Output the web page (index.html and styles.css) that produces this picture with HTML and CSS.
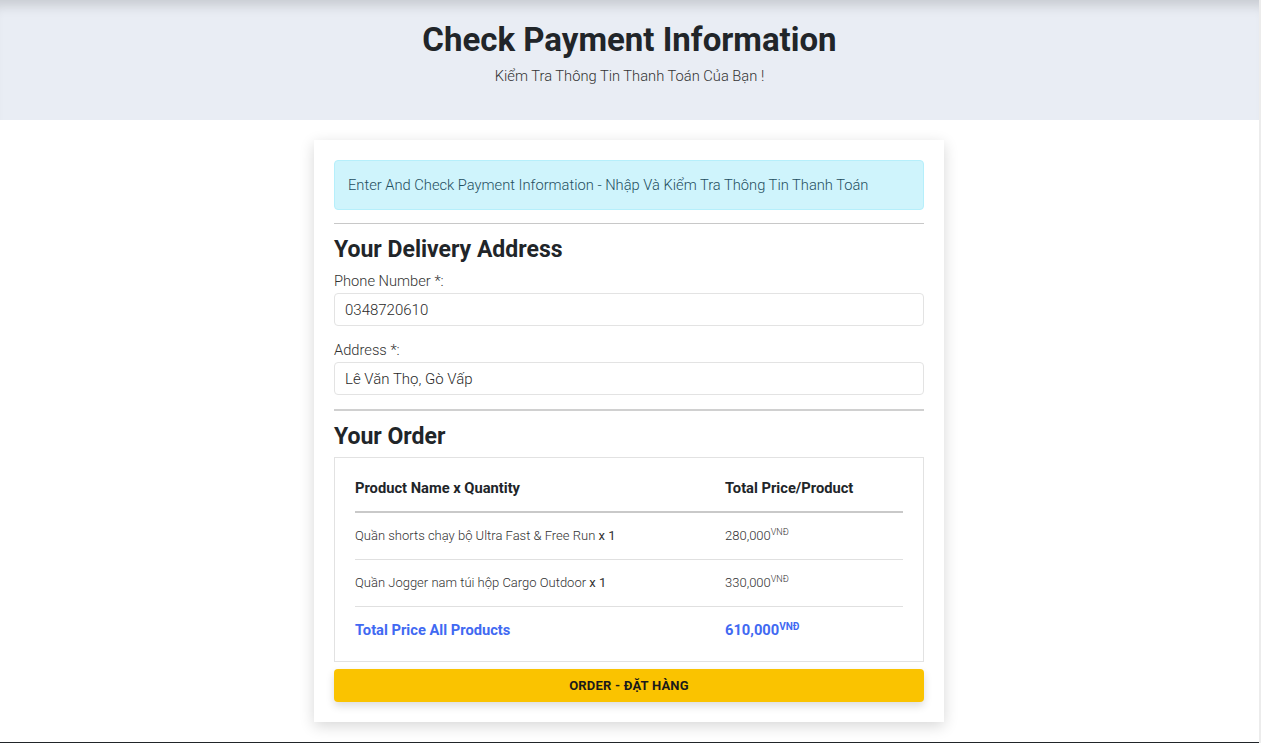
FILE: index.html
```html
<!DOCTYPE html>
<html lang="vi">
<head>
<meta charset="utf-8">
<title>Check Payment Information</title>
<link rel="stylesheet" href="styles.css">
</head>
<body>
<div class="page">
  <header class="hero">
    <h1 class="hero-title">Check Payment Information</h1>
    <p class="hero-sub">Kiểm Tra Thông Tin Thanh Toán Của Bạn !</p>
  </header>
  <main class="main">
    <section class="card">
      <div class="alert">Enter And Check Payment Information - Nhập Và Kiểm Tra Thông Tin Thanh Toán</div>
      <hr class="rule">
      <h2 class="section-title">Your Delivery Address</h2>
      <label class="label">Phone Number *:</label>
      <input class="input" type="text" value="0348720610">
      <label class="label label-gap">Address *:</label>
      <input class="input" type="text" value="Lê Văn Thọ, Gò Vấp">
      <hr class="rule rule-thick">
      <h2 class="section-title">Your Order</h2>
      <div class="order-box">
        <table class="order-table">
          <thead>
            <tr><th class="col-name">Product Name x Quantity</th><th>Total Price/Product</th></tr>
          </thead>
          <tbody>
            <tr><td class="col-name">Quần shorts chạy bộ Ultra Fast &amp; Free Run <span class="qty">x 1</span></td><td>280,000<sup>VNĐ</sup></td></tr>
            <tr><td class="col-name">Quần Jogger nam túi hộp Cargo Outdoor <span class="qty">x 1</span></td><td>330,000<sup>VNĐ</sup></td></tr>
            <tr class="total"><td class="col-name">Total Price All Products</td><td>610,000<sup>VNĐ</sup></td></tr>
          </tbody>
        </table>
      </div>
      <button class="btn-order" type="button">ORDER - ĐẶT HÀNG</button>
    </section>
  </main>
  <footer class="footer"></footer>
</div>
</body>
</html>
```

FILE: styles.css
```css
* { box-sizing: border-box; }
html, body { margin: 0; padding: 0; }
body {
  font-family: Roboto, "Liberation Sans", Arial, sans-serif;
  color: #212529;
  background: #fff;
}
.page {
  border-right: 2px solid #ececec;
  height: 743px;
  overflow: hidden;
  display: flex;
  flex-direction: column;
}
.hero {
  background: #e9edf4;
  height: 120px;
  flex: none;
  padding-top: 19px;
  text-align: center;
  box-shadow: inset 0 14px 12px -8px rgba(0,0,0,0.14);
}
.hero-title {
  margin: 0;
  font-size: 33px;
  line-height: 41px;
  font-weight: 700;
  color: #212529;
}
.hero-sub {
  margin: 5px 0 0;
  font-size: 14.7px;
  line-height: 22px;
  font-weight: 300;
  color: #333;
}
.main {
  flex: none;
  display: flex;
  justify-content: center;
  padding: 20px 1px 20px 0;
}
.card {
  width: 630px;
  background: #fff;
  padding: 20px 20px 20px;
  box-shadow: 0 4px 14px rgba(0,0,0,0.16);
  display: flex;
  flex-direction: column;
}
.alert {
  background: #cff4fc;
  border: 1px solid #b6effb;
  border-radius: 4px;
  padding: 13px 13px;
  font-size: 14.7px;
  line-height: 22px;
  font-weight: 300;
  color: #1f4f60;
}
.rule {
  margin: 13px 0 12px;
  border: 0;
  border-top: 1px solid #c8c8c8;
  height: 0;
}
.rule-thick {
  border-top: 2px solid #d0d0d0;
  margin: 14px 0 12px;
}
.section-title {
  margin: 0;
  font-size: 23px;
  line-height: 27px;
  font-weight: 700;
  color: #212529;
}
.label {
  display: block;
  margin-top: 7px;
  font-size: 14.7px;
  line-height: 22px;
  font-weight: 300;
  color: #333;
}
.label-gap { margin-top: 13px; }
.input {
  display: block;
  width: 100%;
  margin-top: 1px;
  height: 33px;
  padding: 6px 10px;
  border: 1px solid #e3e3e3;
  border-radius: 4px;
  font-family: inherit;
  font-size: 15px;
  line-height: 19px;
  font-weight: 300;
  color: #2a2a2a;
  background: #fff;
}
.order-box {
  margin-top: 7px;
  border: 1px solid #e2e2e2;
  padding: 7px 20px 8px;
}
.order-table {
  width: 100%;
  border-collapse: collapse;
}
.order-table th, .order-table td {
  text-align: left;
  padding: 12px 0;
  line-height: 22px;
  vertical-align: middle;
}
.order-table th {
  font-size: 14.7px;
  font-weight: 700;
  color: #212529;
  border-bottom: 2px solid #c9c9c9;
}
.order-table td {
  font-size: 13px;
  font-weight: 300;
  color: #333;
  border-bottom: 1px solid #e0e0e0;
}
.col-name { width: 370px; }
.qty { font-weight: 400; color: #333; }
.order-table sup {
  font-size: 9px;
  line-height: 0;
  vertical-align: 5px;
}
.order-table tr.total td {
  border-bottom: 0;
  font-size: 14.7px;
  font-weight: 700;
  color: #4169f2;
}
.order-table tr.total sup { font-size: 10px; }
.btn-order {
  margin-top: 7px;
  height: 33px;
  width: 100%;
  border: 0;
  border-radius: 4px;
  background: #fac300;
  font-family: inherit;
  font-size: 13px;
  font-weight: 700;
  color: #1a1a1a;
  letter-spacing: 0.2px;
  box-shadow: 0 4px 8px rgba(0,0,0,0.14);
}
.footer {
  flex: 1;
  background: #212529;
}
```
